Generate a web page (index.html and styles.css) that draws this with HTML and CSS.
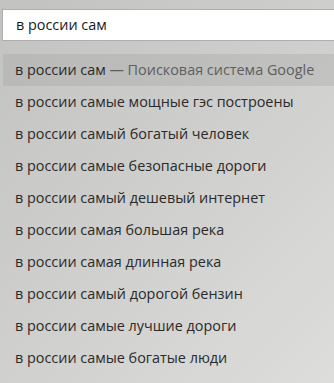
FILE: index.html
```html
<!DOCTYPE html>
<html lang="ru">
<head>
<meta charset="utf-8">
<link rel="stylesheet" href="styles.css">
</head>
<body>
<div class="panel">
  <div class="search">в россии сам</div>
  <ul class="list">
    <li class="item active">в россии сам<span class="hint"> — Поисковая система Google</span></li>
    <li class="item">в россии самые мощные гэс построены</li>
    <li class="item">в россии самый богатый человек</li>
    <li class="item">в россии самые безопасные дороги</li>
    <li class="item">в россии самый дешевый интернет</li>
    <li class="item">в россии самая большая река</li>
    <li class="item">в россии самая длинная река</li>
    <li class="item">в россии самый дорогой бензин</li>
    <li class="item">в россии самые лучшие дороги</li>
    <li class="item">в россии самые богатые люди</li>
  </ul>
</div>
</body>
</html>
```
FILE: styles.css
```css
html, body {
  margin: 0;
  padding: 0;
}
body {
  width: 334px;
  height: 383px;
  overflow: hidden;
  background: linear-gradient(135deg, #c2c2c0 0%, #cfcfcd 50%, #dddddb 100%);
  font-family: "Open Sans", "Noto Sans", sans-serif;
  font-size: 14.4px;
  color: #2a2a2a;
}
.panel {
  padding: 9px 0 0 2px;
}
.search {
  box-sizing: border-box;
  height: 32px;
  margin-right: -10px;
  background: #fff;
  border: 1px solid #aeaeae;
  padding-left: 13px;
  line-height: 29px;
  color: #1a1a1a;
}
.list {
  list-style: none;
  margin: 13px 0 0 1px;
  padding: 0;
}
.item {
  height: 32px;
  line-height: 32px;
  padding-left: 12px;
  white-space: nowrap;
}
.item.active {
  background: rgba(160, 160, 158, 0.3);
}
.hint {
  color: #5e5e5e;
}
```
